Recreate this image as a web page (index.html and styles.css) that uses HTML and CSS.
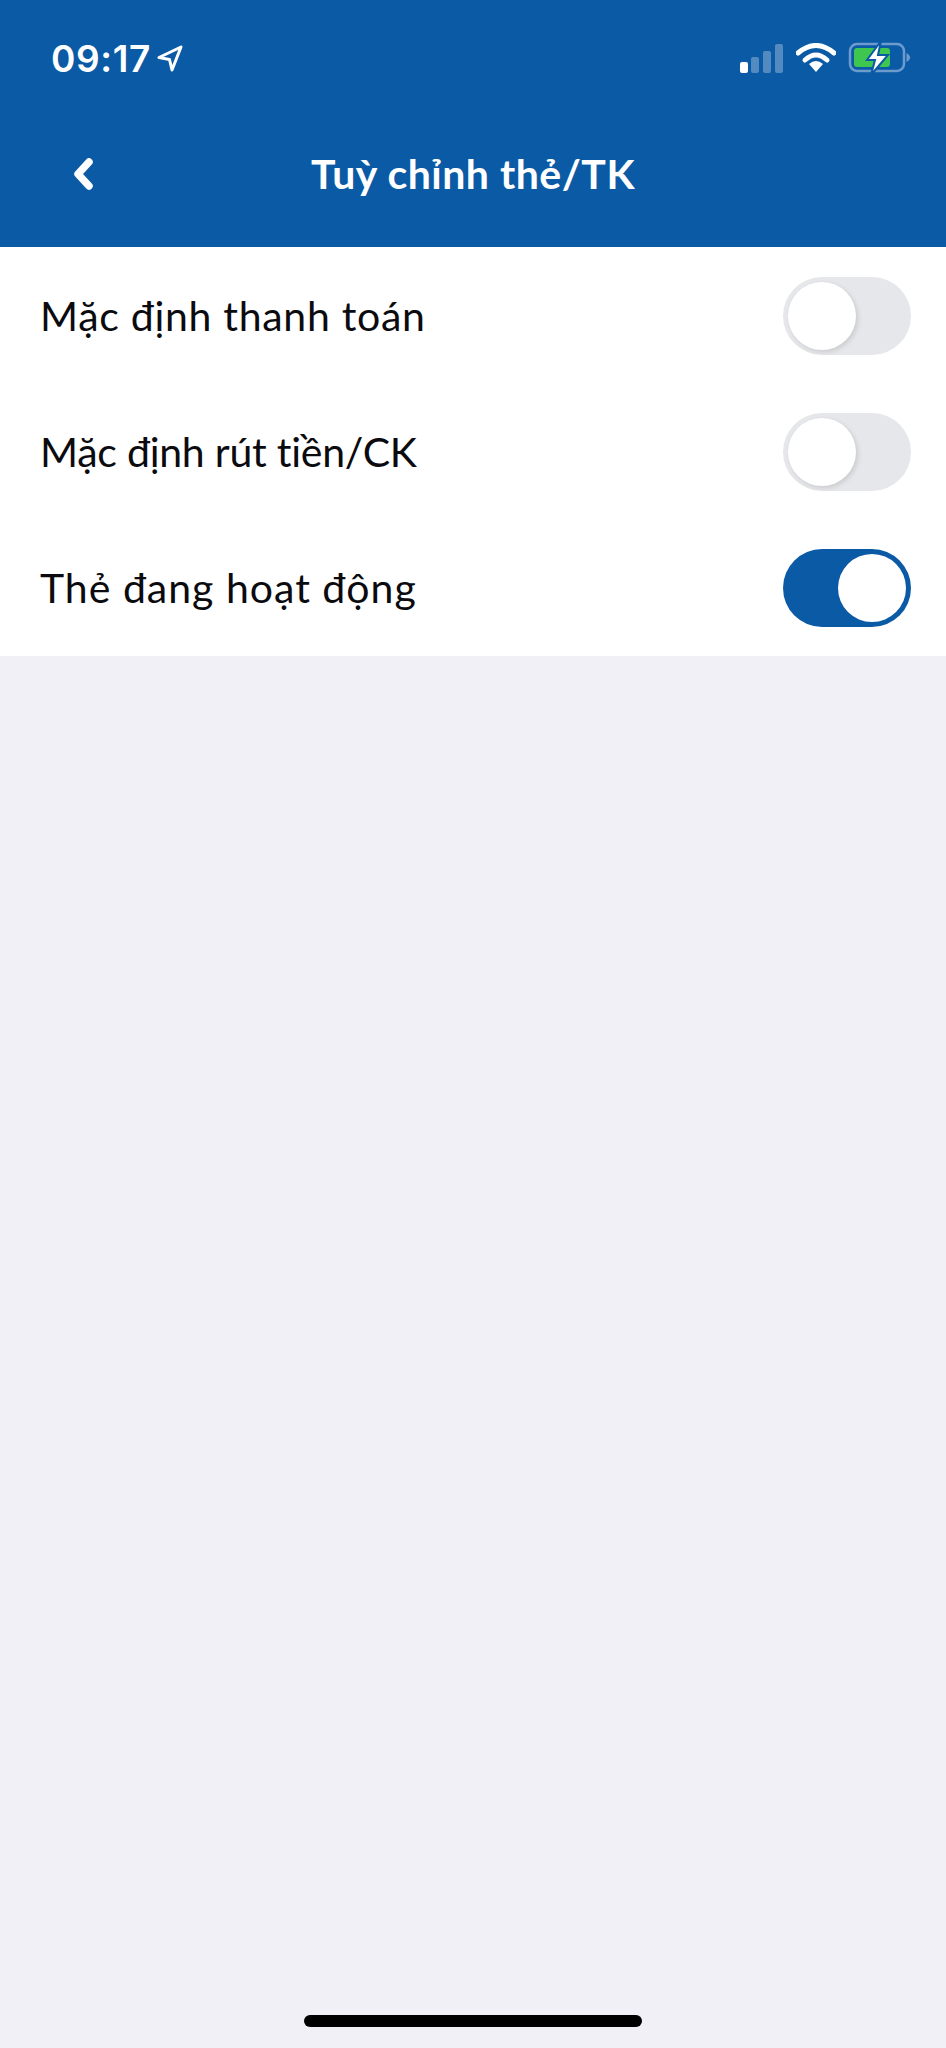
FILE: index.html
```html
<!DOCTYPE html>
<html lang="vi">
	<head>
		<meta charset="UTF-8">
		<title>Tuỳ chỉnh thẻ/TK</title>
		<link rel="stylesheet" href="styles.css">
	</head>
	<body>
		<div class="page">
			<header class="header">
				<div class="status">
					<div class="status-left">
						<span class="time">09:17</span>
						<svg class="arrow" width="26" height="27" viewBox="0 0 26 27">
							<path d="M24 2 L2 12.5 L12.5 14.5 L15 25 Z" fill="none" stroke="#fff" stroke-width="3" stroke-linejoin="round"/>
						</svg>
					</div>
					<div class="status-right">
						<svg width="46" height="30" viewBox="0 0 46 30">
							<rect x="2" y="19" width="8" height="11" rx="2" fill="#fff"/>
							<rect x="13" y="14" width="8" height="16" rx="2" fill="#fff" opacity=".3"/>
							<rect x="25" y="8" width="8" height="22" rx="2" fill="#fff" opacity=".3"/>
							<rect x="37" y="1" width="8" height="29" rx="2" fill="#fff" opacity=".3"/>
						</svg>
						<svg width="40" height="30" viewBox="0 0 40 30">
							<path d="M2 10 Q20 -5 38 10" fill="none" stroke="#fff" stroke-width="5" stroke-linecap="round"/>
							<path d="M9 17 Q20 7 31 17" fill="none" stroke="#fff" stroke-width="5" stroke-linecap="round"/>
							<path d="M13 21 Q20 15 27 21 L20 29 Z" fill="#fff"/>
						</svg>
						<svg width="64" height="36" viewBox="0 0 64 36">
							<rect x="2" y="4" width="54" height="27" rx="7" fill="none" stroke="#6d9bcd" stroke-width="2.5"/>
							<rect x="6" y="8" width="36" height="19" rx="3" fill="#3fc64f"/>
							<path d="M58.500 13 Q62 15 62 17.500 Q62 20 58.500 22 Z" fill="#6d9bcd"/>
							<path d="M33 1 L19 20 L27 20 L23 35 L40 15 L30 15 Z" fill="#fff" stroke="#0a5aa5" stroke-width="2"/>
						</svg>
					</div>
				</div>
				<div class="navbar">
					<svg class="back" width="24" height="34" viewBox="0 0 24 34">
						<path d="M18 5 L7 17 L18 29" fill="none" stroke="#fff" stroke-width="7.500" stroke-linecap="round" stroke-linejoin="round"/>
					</svg>
					<h1 class="title">Tuỳ chỉnh thẻ/TK</h1>
				</div>
			</header>

			<section class="options">
				<div class="row">
					<span class="label label-pay">Mặc định thanh toán</span>
					<div class="toggle"><div class="knob"></div></div>
				</div>
				<div class="row">
					<span class="label label-withdraw">Mặc định rút tiền/CK</span>
					<div class="toggle"><div class="knob"></div></div>
				</div>
				<div class="row">
					<span class="label label-active">Thẻ đang hoạt động</span>
					<div class="toggle on"><div class="knob"></div></div>
				</div>
			</section>

			<div class="filler"></div>
			<div class="home-bar"></div>
		</div>
	</body>
</html>
```

FILE: styles.css
```css
* {
	box-sizing: border-box;
}
body {
	margin: 0;
	background-color: #f0f0f6;
	color: #0b0b0f;
	font-family: Lato, "Noto Sans", sans-serif;
}
.page {
	display: flex;
	flex-direction: column;
	height: 2048px;
}
.header {
	height: 247px;
	background-color: #0a5aa5;
	color: #fff;
}
.status {
	display: flex;
	justify-content: space-between;
	align-items: center;
	height: 116px;
	padding: 0 34px 0 51px;
}
.status-left {
	display: flex;
	align-items: center;
	gap: 6px;
}
.time {
	font-family: Inter, sans-serif;
	font-size: 37px;
	font-weight: 600;
	letter-spacing: 0.6px;
}
.status-right {
	display: flex;
	align-items: center;
	gap: 12px;
}
.navbar {
	display: flex;
	align-items: center;
	justify-content: center;
	position: relative;
	height: 116px;
	padding-bottom: 2px;
}
.back {
	position: absolute;
	left: 71px;
	top: 41px;
}
.title {
	margin: 0;
	font-size: 41px;
	font-weight: 700;
	letter-spacing: 0.5px;
}
.options {
	display: flex;
	flex-direction: column;
	gap: 58px;
	padding: 30px 35px 29px 40px;
	background-color: #fff;
}
.row {
	display: flex;
	justify-content: space-between;
	align-items: center;
	height: 78px;
}
.label {
	padding-bottom: 2px;
	font-size: 41px;
}
/* Lato runs narrower than the app font on lowercase and wider on caps */
.label-pay {
	letter-spacing: 0.7px;
}
.label-withdraw {
	letter-spacing: -0.25px;
}
.label-active {
	letter-spacing: 1px;
}
.toggle {
	display: flex;
	align-items: center;
	width: 128px;
	height: 78px;
	padding: 5px;
	border-radius: 39px;
	background-color: #e6e7ea;
}
.toggle.on {
	justify-content: flex-end;
	background-color: #0a5aa5;
}
.knob {
	width: 68px;
	height: 68px;
	border-radius: 50%;
	background-color: #fff;
	box-shadow: 2px 2px 5px rgba(0, 0, 0, 0.12);
}
.toggle.on .knob {
	box-shadow: none;
}
.filler {
	flex: 1;
}
.home-bar {
	align-self: center;
	width: 338px;
	height: 12px;
	margin-bottom: 21px;
	border-radius: 6px;
	background-color: #000;
}
```
